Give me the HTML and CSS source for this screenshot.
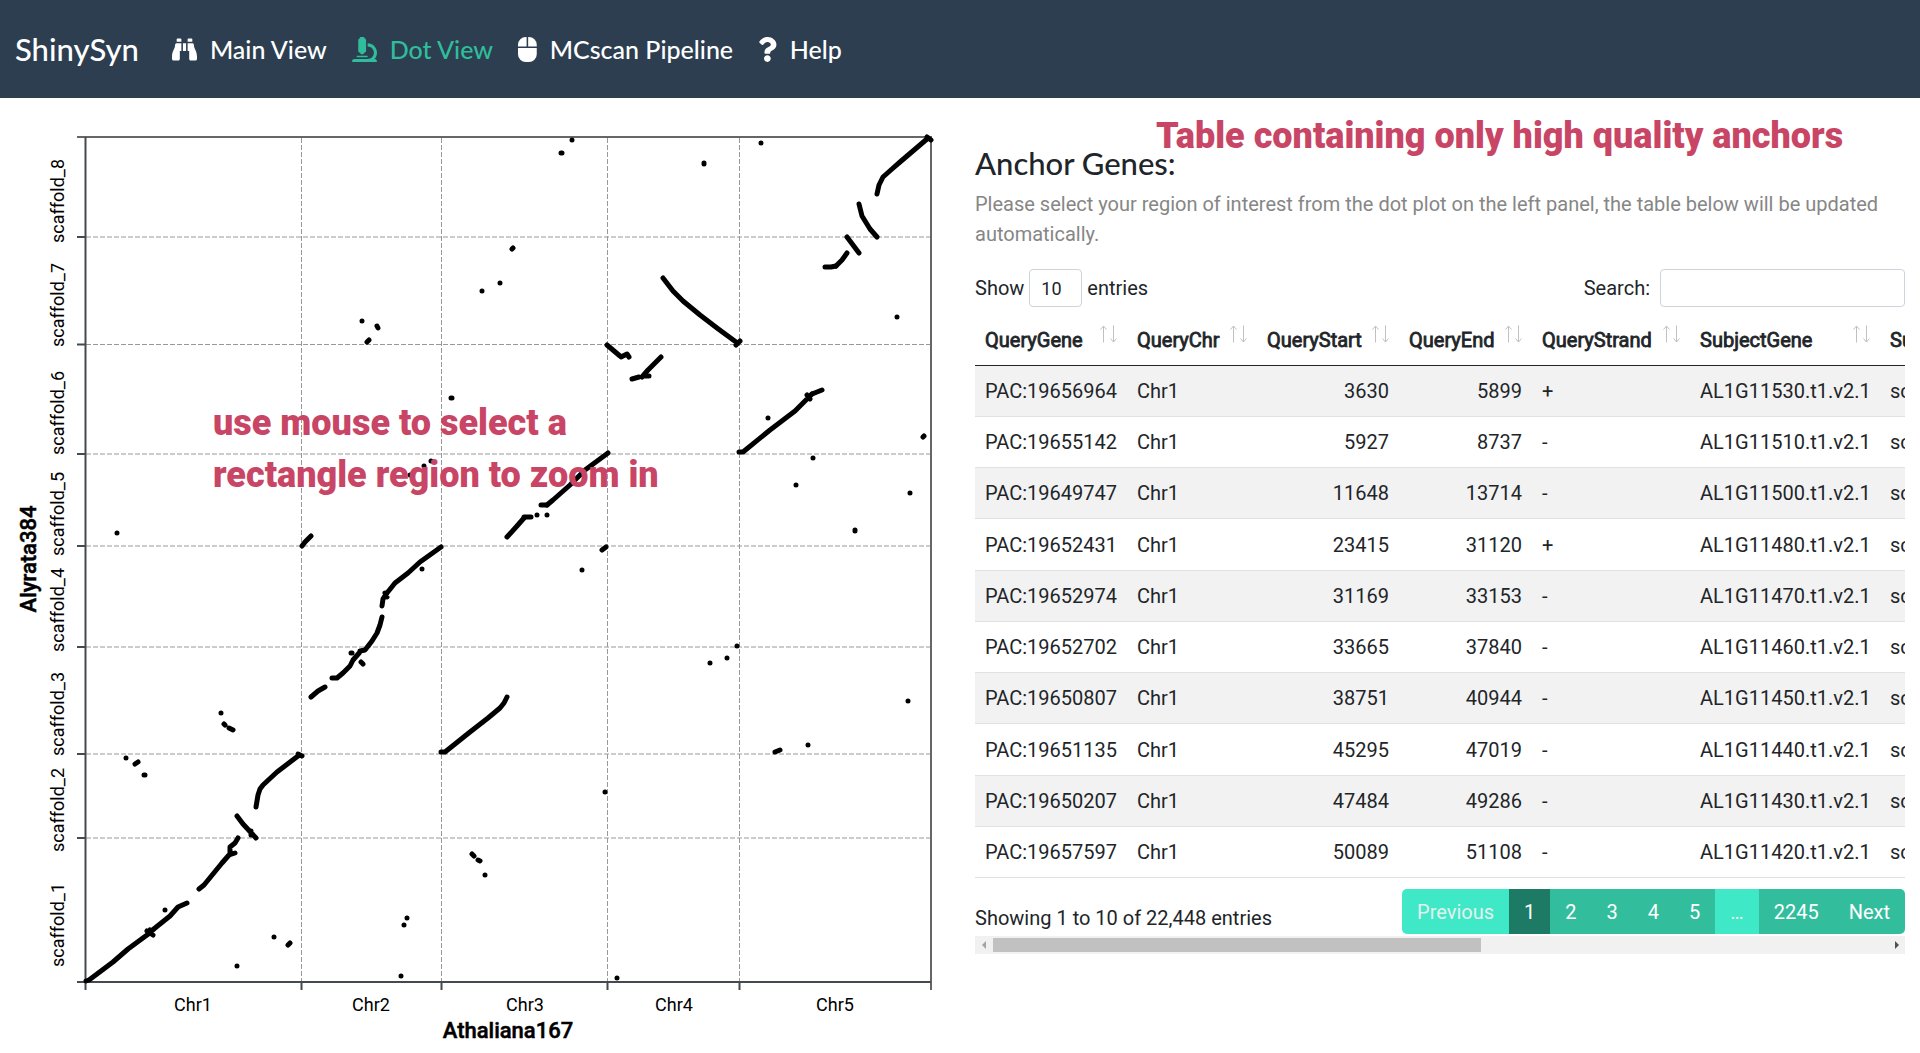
FILE: index.html
```html
<!DOCTYPE html>
<html lang="en">
<head>
<meta charset="utf-8">
<title>ShinySyn</title>
<meta name="viewport" content="width=device-width, initial-scale=1">
<link rel="stylesheet" href="styles.css">
</head>
<body>
<svg class="sprite" aria-hidden="true">
  <symbol id="sort" viewBox="0 0 18 18"><path d="M4.500 17.500V1M1.500 4.500 4.500 1l3 3.500M14.500 0.500V17M11.500 13.500 14.500 17l3-3.500" fill="none" stroke="currentColor"/></symbol>
</svg>

<nav class="navbar">
  <a class="brand" href="#">ShinySyn</a>
  <ul class="nav-list">
    <li><a class="nav-link" href="#"><svg class="icon" viewBox="0 0 512 512" aria-hidden="true"><path d="M416 48c0-8.840-7.160-16-16-16h-64c-8.840 0-16 7.160-16 16v48h96V48zM63.910 159.990C61.400 253.840 3.460 274.220 0 404v44c0 17.670 14.330 32 32 32h96c17.670 0 32-14.330 32-32V288h32V128H95.840c-17.630 0-31.450 14.370-31.930 31.990zm384.180 0c-.480-17.620-14.300-31.990-31.930-31.990H320v160h32v160c0 17.670 14.330 32 32 32h96c17.670 0 32-14.330 32-32v-44c-3.460-129.780-61.400-150.160-63.910-244.010zM176 32h-64c-8.840 0-16 7.160-16 16v48h96V48c0-8.840-7.160-16-16-16zm48 256h64V128h-64v160z"/></svg>Main View</a></li>
    <li><a class="nav-link active" href="#"><svg class="icon" viewBox="0 0 512 512" aria-hidden="true"><path d="M160 320h12v16c0 8.840 7.160 16 16 16h40c8.840 0 16-7.160 16-16v-16h12c17.670 0 32-14.330 32-32V64c0-17.670-14.330-32-32-32V16c0-8.840-7.160-16-16-16h-64c-8.840 0-16 7.160-16 16v16c-17.670 0-32 14.330-32 32v224c0 17.670 14.330 32 32 32zm304 128h-1.290C493.240 413.990 512 369.200 512 320c0-105.880-86.120-192-192-192v64c70.580 0 128 57.420 128 128s-57.420 128-128 128H48c-26.510 0-48 21.490-48 48 0 8.840 7.160 16 16 16h480c8.840 0 16-7.160 16-16 0-26.510-21.490-48-48-48zm-360-32h208c4.420 0 8-3.580 8-8v-16c0-4.420-3.580-8-8-8H104c-4.420 0-8 3.580-8 8v16c0 4.420 3.580 8 8 8z"/></svg>Dot View</a></li>
    <li><a class="nav-link" href="#"><svg class="icon" viewBox="0 0 384 512" aria-hidden="true"><path d="M0 352a160 160 0 0 0 160 160h64a160 160 0 0 0 160-160V224H0zM176 0h-16A160 160 0 0 0 0 160v32h176zm48 0h-16v192h176v-32A160 160 0 0 0 224 0z"/></svg>MCscan Pipeline</a></li>
    <li><a class="nav-link" href="#"><svg class="icon" viewBox="0 0 384 512" aria-hidden="true"><path d="M202.021 0C122.202 0 70.503 32.703 29.914 91.026c-7.363 10.580-5.093 25.086 5.178 32.874l43.138 32.709c10.373 7.865 25.132 6.026 33.253-4.148 25.049-31.381 43.630-49.449 82.757-49.449 30.764 0 68.816 19.799 68.816 49.631 0 22.552-18.617 34.134-48.993 51.164-35.423 19.860-82.299 44.576-82.299 106.405V320c0 13.255 10.745 24 24 24h72.471c13.255 0 24-10.745 24-24v-5.773c0-42.860 125.268-44.645 125.268-160.627C377.504 66.256 286.902 0 202.021 0zM192 373.459c-38.196 0-69.271 31.075-69.271 69.271 0 38.195 31.075 69.270 69.271 69.270s69.271-31.075 69.271-69.271-31.075-69.270-69.271-69.270z"/></svg>Help</a></li>
  </ul>
</nav>

<main class="panels">
  <section class="plot-panel">
    <svg class="plot" viewBox="15 98 930 955" role="img" aria-label="Dot plot of Alyrata384 against Athaliana167">
      <path class="grid" d="M86 237H931M86 344.500H931M86 454H931M86 546H931M86 647H931M86 754H931M86 838H931M301.500 138V982M441.500 138V982M607.500 138V982M739.500 138V982"/>
      <path class="frame" d="M77 137H931V990"/>
      <path class="axis" d="M77 982H931M85.500 137V990"/>
      <path class="tick" d="M77 237h9M77 344.500h9M77 454h9M77 546h9M77 647h9M77 754h9M77 838h9M301.500 982v8M441.500 982v8M607.500 982v8M739.500 982v8"/>
      <path class="anchors" d="M86 981 89 980 113 962 128 949 147 935 155 928 170 916 178 907 187 903M147 931 153 935M147 935 150 930M199 889 204 885 213 874 222 863 229 855 235 853M230 854V847L235 843 238 838M237 816 243 824 256 838M251 831V835M256 807 258 795 260 789 263 785 277 772 298 756M298 754 302 756M311 697 318 691 325 687M332 678H337L343 673 350 666 353 660 360 652M360 651 365 650 372 641 377 633 380 625 382 617M382 606 383 599 387 593 395 583 408 573 420 562 441 547M385 593 387 597M302 546 305 542 311 536M441 752H445L460 740 470 732 488 718 500 708 504 703 507 697M877 194 879 185 883 177 892 169 900 162 927 139M927 137 931 140M859 204 862 216 870 229 877 237M847 237 859 253M836 266 842 260 847 253M663 278 673 291 683 301 700 315 717 328 736 342M736 345 740 341M607 345 620 356M621 357 627 354 629 357M642 377 648 370 661 357M739 452H743L770 430 795 411 808 398 812 394M807 395 810 399M608 453 585 470 570 485 553 500 547 505M507 537 517 526 524 518"/>
      <path class="dots" d="M825 267H831L836 266M632 379 639 377M645 376H649M812 394 822 390M547 505H541M524 517H531M165 910h0M126 758h0M135 764l3-2M144 775h1M221 713h0M224 724l1 1M229 728l4 2M274 937h0M288 945l2-2M237 966h0M401 976h0M407 918h0M404 925h0M351 653h1M361 662l2 2M422 569h0M472 854l2 2M478 860l2 1M485 875h0M617 978h0M605 792h0M602 550l4-3M582 570h0M710 663h0M727 658h0M737 646h0M775 752l5-2M808 745h0M908 701h0M572 140h0M561 153h1M704 163v1M761 143h0M512 249l1-1M500 283h0M482 291h0M897 317h0M768 418h0M923 437l1-1M813 458h0M796 485h0M910 493h0M855 530v1M537 515h0M547 515h0M362 321h0M377 326l1 2M367 342l2-2M451 398h1M431 461h0M424 466h0M410 475h0M117 533h0"/>
      <g class="labels">
        <text x="193" y="1011">Chr1</text>
        <text x="371" y="1011">Chr2</text>
        <text x="525" y="1011">Chr3</text>
        <text x="674" y="1011">Chr4</text>
        <text x="835" y="1011">Chr5</text>
        <text transform="translate(64 201) rotate(-90)">scaffold_8</text>
        <text transform="translate(64 305) rotate(-90)">scaffold_7</text>
        <text transform="translate(64 413) rotate(-90)">scaffold_6</text>
        <text transform="translate(64 514) rotate(-90)">scaffold_5</text>
        <text transform="translate(64 610) rotate(-90)">scaffold_4</text>
        <text transform="translate(64 714) rotate(-90)">scaffold_3</text>
        <text transform="translate(64 810) rotate(-90)">scaffold_2</text>
        <text transform="translate(64 925) rotate(-90)">scaffold_1</text>
      </g>
      <g class="axis-titles">
        <text x="508" y="1038">Athaliana167</text>
        <text transform="translate(36 559) rotate(-90)">Alyrata384</text>
      </g>
    </svg>
    <p class="note plot-note">use mouse to select a<br>rectangle region to zoom in</p>
  </section>

  <section class="table-panel">
    <p class="note table-note">Table containing only high quality anchors</p>
    <h1 class="title">Anchor Genes:</h1>
    <p class="hint">Please select your region of interest from the dot plot on the left panel, the table below will be updated automatically.</p>
    <div class="controls">
      <label class="length">Show <select class="field"><option>10</option><option>25</option></select> entries</label>
      <label class="search">Search: <input class="field" type="search"></label>
    </div>
    <div class="table-scroll">
      <table class="genes">
        <colgroup><col class="c-gene"><col class="c-chr"><col class="c-start"><col class="c-end"><col class="c-strand"><col class="c-subject"><col class="c-schr"></colgroup>
        <thead><tr>
          <th><div class="head">QueryGene<svg class="sort"><use href="#sort"/></svg></div></th>
          <th><div class="head">QueryChr<svg class="sort"><use href="#sort"/></svg></div></th>
          <th><div class="head">QueryStart<svg class="sort"><use href="#sort"/></svg></div></th>
          <th><div class="head">QueryEnd<svg class="sort"><use href="#sort"/></svg></div></th>
          <th><div class="head">QueryStrand<svg class="sort"><use href="#sort"/></svg></div></th>
          <th><div class="head">SubjectGene<svg class="sort"><use href="#sort"/></svg></div></th>
          <th><div class="head">SubjectChr<svg class="sort"><use href="#sort"/></svg></div></th>
        </tr></thead>
        <tbody>
          <tr><td>PAC:19656964</td><td>Chr1</td><td class="num">3630</td><td class="num">5899</td><td>+</td><td>AL1G11530.t1.v2.1</td><td>scaffold_1</td></tr>
          <tr><td>PAC:19655142</td><td>Chr1</td><td class="num">5927</td><td class="num">8737</td><td>-</td><td>AL1G11510.t1.v2.1</td><td>scaffold_1</td></tr>
          <tr><td>PAC:19649747</td><td>Chr1</td><td class="num">11648</td><td class="num">13714</td><td>-</td><td>AL1G11500.t1.v2.1</td><td>scaffold_1</td></tr>
          <tr><td>PAC:19652431</td><td>Chr1</td><td class="num">23415</td><td class="num">31120</td><td>+</td><td>AL1G11480.t1.v2.1</td><td>scaffold_1</td></tr>
          <tr><td>PAC:19652974</td><td>Chr1</td><td class="num">31169</td><td class="num">33153</td><td>-</td><td>AL1G11470.t1.v2.1</td><td>scaffold_1</td></tr>
          <tr><td>PAC:19652702</td><td>Chr1</td><td class="num">33665</td><td class="num">37840</td><td>-</td><td>AL1G11460.t1.v2.1</td><td>scaffold_1</td></tr>
          <tr><td>PAC:19650807</td><td>Chr1</td><td class="num">38751</td><td class="num">40944</td><td>-</td><td>AL1G11450.t1.v2.1</td><td>scaffold_1</td></tr>
          <tr><td>PAC:19651135</td><td>Chr1</td><td class="num">45295</td><td class="num">47019</td><td>-</td><td>AL1G11440.t1.v2.1</td><td>scaffold_1</td></tr>
          <tr><td>PAC:19650207</td><td>Chr1</td><td class="num">47484</td><td class="num">49286</td><td>-</td><td>AL1G11430.t1.v2.1</td><td>scaffold_1</td></tr>
          <tr><td>PAC:19657597</td><td>Chr1</td><td class="num">50089</td><td class="num">51108</td><td>-</td><td>AL1G11420.t1.v2.1</td><td>scaffold_1</td></tr>
        </tbody>
      </table>
    </div>
    <div class="table-footer">
      <p class="info">Showing 1 to 10 of 22,448 entries</p>
      <div class="pagination">
        <button class="page" disabled>Previous</button>
        <button class="page current">1</button>
        <button class="page">2</button>
        <button class="page">3</button>
        <button class="page">4</button>
        <button class="page">5</button>
        <button class="page" disabled>…</button>
        <button class="page">2245</button>
        <button class="page">Next</button>
      </div>
    </div>
    <div class="scrollbar" aria-hidden="true">
      <svg class="arrow arrow-left" viewBox="0 0 18 18"><path d="M11 5v8L7 9z"/></svg>
      <div class="track"><div class="thumb"></div></div>
      <svg class="arrow" viewBox="0 0 18 18"><path d="M8 5v8l4-4z"/></svg>
    </div>
  </section>
</main>
</body>
</html>
```
FILE: styles.css
```css
* { box-sizing: border-box; }

body {
  margin: 0;
  background: #fff;
  color: #212529;
  font-family: Roboto, "Liberation Sans", sans-serif;
  font-size: 20px;
  line-height: 30px;
}

p, h1, ul { margin: 0; }

.sprite { position: absolute; width: 0; height: 0; }

/* Navigation bar */
.navbar {
  display: flex;
  align-items: center;
  height: 98px;
  padding: 0 15px;
  background: #2c3e50;
  font-family: Lato, "Open Sans", sans-serif;
  font-weight: 500;
}

.brand {
  margin-right: 33px;
  color: #fff;
  font-size: 31px;
  text-decoration: none;
}

.nav-list {
  display: flex;
  gap: 25px;
  padding: 0;
  list-style: none;
}

.nav-link {
  display: flex;
  align-items: center;
  gap: 13px;
  color: #fff;
  font-size: 25px;
  text-decoration: none;
}

.nav-link.active { color: #30bd9b; }

.icon { height: 25px; fill: currentColor; }

/* Two equal panels */
.panels {
  display: grid;
  grid-template-columns: minmax(0, 1fr) minmax(0, 1fr);
  gap: 30px;
  padding: 0 15px;
}

.plot-panel, .table-panel { position: relative; }

.note {
  position: absolute;
  color: #c84565;
  font-size: 36px;
  font-weight: 900;
  line-height: 52px;
  white-space: nowrap;
}

.plot-note { top: 299px; left: 198px; }
.table-note { top: 12px; left: 181px; }

/* Dot plot */
.plot { display: block; width: 100%; height: auto; }
.plot path { fill: none; }
.grid { stroke: #999; stroke-width: 1; stroke-dasharray: 5 2; }
.frame { stroke: #666; stroke-width: 2; }
.axis, .tick { stroke: #444a50; stroke-width: 2; }
.anchors, .dots { stroke: #000; stroke-linecap: round; stroke-linejoin: round; stroke-width: 5; }
.labels text, .axis-titles text { fill: #000; text-anchor: middle; }
.labels { font-size: 18px; }
.axis-titles { font-size: 22px; font-weight: 500; stroke: #000; stroke-width: 0.5; }

/* Table panel */
.title {
  padding-top: 46px;
  font-family: Lato, "Open Sans", sans-serif;
  font-size: 31px;
  font-weight: 500;
  line-height: 38px;
}

.hint { margin-top: 7px; color: #868686; }

.controls {
  display: flex;
  justify-content: space-between;
  margin-top: 20px;
}

.length, .search { display: flex; align-items: baseline; gap: 5px; }
.search { gap: 10px; }

.field {
  height: 38px;
  padding: 0 11px;
  border: 1px solid #ced4da;
  border-radius: 4px;
  background: #fff;
  color: #212529;
  font-family: inherit;
  font-size: 18px;
  appearance: none;
}

.length .field { width: 53px; }
.search .field { width: 245px; }

.table-scroll { margin-top: 8px; overflow: hidden; }

.genes {
  width: 1051px;
  border-collapse: separate;
  border-spacing: 0;
  table-layout: fixed;
}

.c-gene { width: 152px; }
.c-chr { width: 130px; }
.c-start { width: 142px; }
.c-end { width: 133px; }
.c-strand { width: 158px; }
.c-subject { width: 190px; }
.c-schr { width: 146px; }

.genes th, .genes td { height: 51px; padding: 0 10px; text-align: left; }
.genes th { border-bottom: 1px solid #212529; font-weight: 400; -webkit-text-stroke: 0.8px; }
.genes td { border-bottom: 1px solid #dee2e6; }
.genes tr:nth-child(4n) td { height: 52px; }
.genes tbody tr:nth-child(odd) { background: #f2f2f2; }
.genes .num { text-align: right; }

.head { display: flex; justify-content: space-between; }
.sort { flex: none; width: 18px; height: 18px; color: #bfc1c3; }

.table-footer {
  display: flex;
  justify-content: space-between;
  align-items: flex-start;
  margin-top: 11px;
}

.info { padding-top: 14px; }

.pagination { display: flex; overflow: hidden; border-radius: 5px; }

.page {
  height: 45px;
  padding: 0 15px;
  border: 0;
  background: #32be9d;
  color: #fff;
  font: inherit;
}

.page.current { background: #1d7b65; }
.page:disabled { background: #3fe8c6; color: #e4f1ee; }

/* Horizontal scrollbar of the table */
.scrollbar {
  display: flex;
  align-items: center;
  height: 18px;
  margin-top: 2px;
  background: #f1f1f1;
}

.arrow { width: 18px; height: 18px; fill: #505050; }
.arrow-left { fill: #a3a3a3; }
.track { flex: 1; }
.thumb { width: 54.6%; height: 14px; background: #c1c1c1; }
```
